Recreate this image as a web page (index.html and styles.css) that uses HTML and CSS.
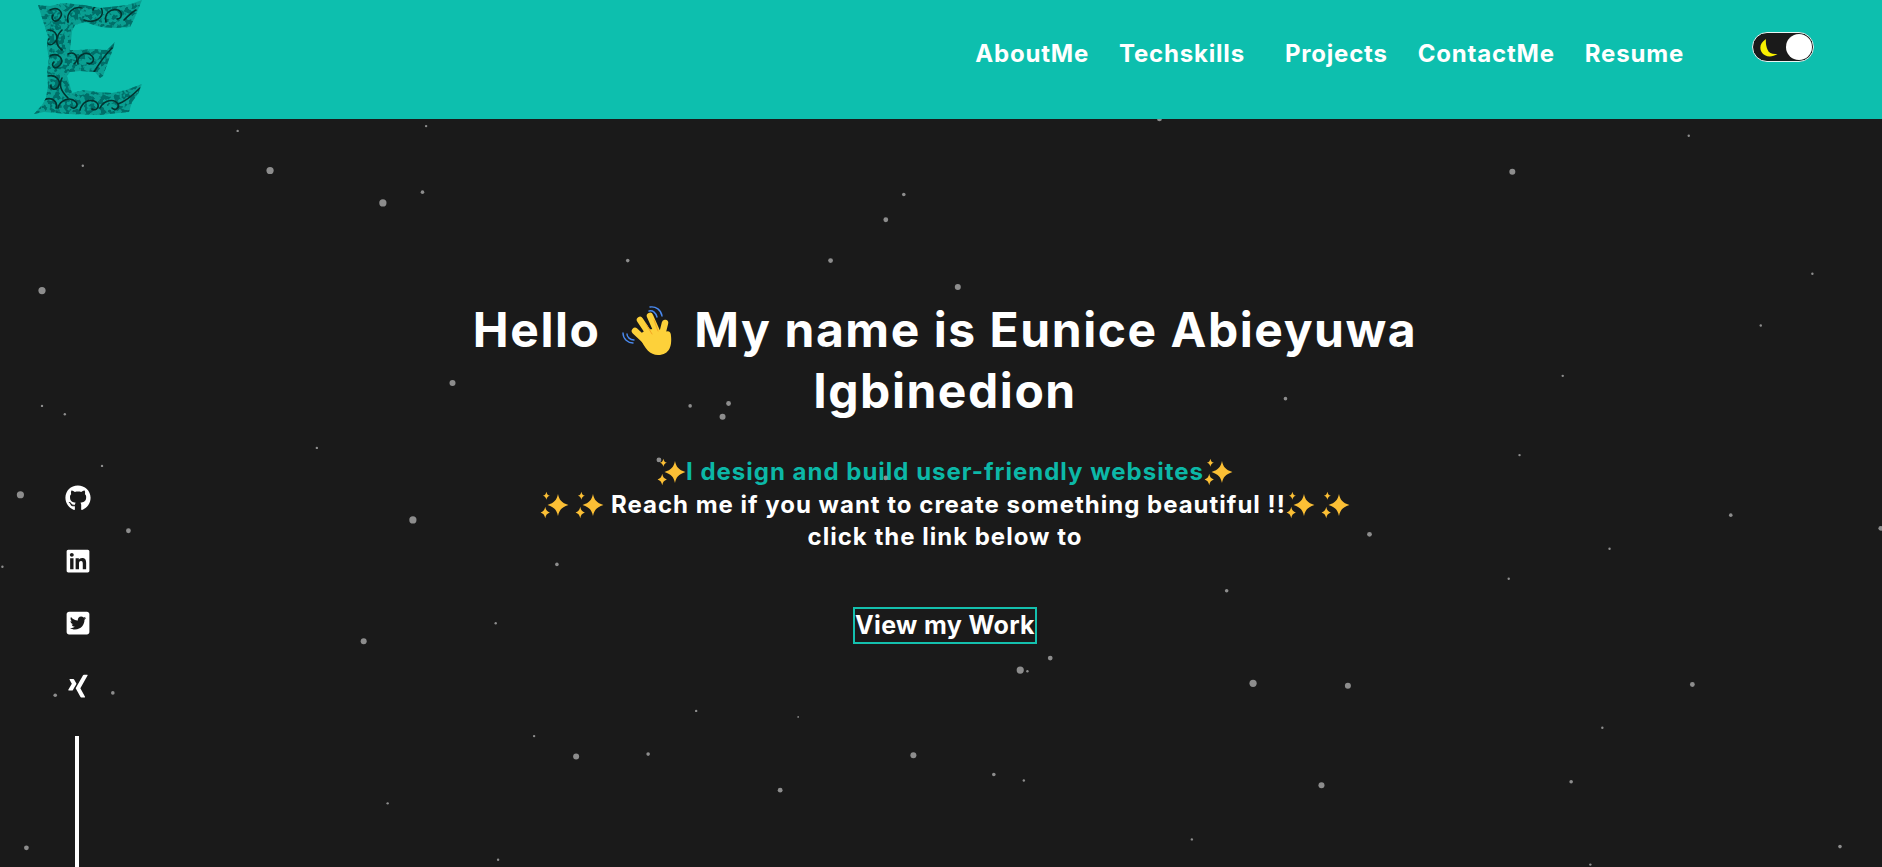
FILE: index.html
```html
<!DOCTYPE html>
<html lang="en">
<head>
<meta charset="utf-8">
<title>Eunice Abieyuwa Igbinedion</title>
<link rel="stylesheet" href="styles.css">
</head>
<body>
<svg class="stars" viewBox="0 0 1568 722" preserveAspectRatio="none" aria-hidden="true">
<g fill="#fff" fill-opacity=".5">
<circle cx="198" cy="109" r="1"/><circle cx="355" cy="105" r="1"/><circle cx="69" cy="138" r="1"/><circle cx="225" cy="142" r="3"/><circle cx="352" cy="160" r="1.5"/><circle cx="319" cy="169" r="3"/><circle cx="753" cy="162" r="1.5"/><circle cx="738" cy="183" r="2"/><circle cx="966" cy="99" r="2"/><circle cx="1407" cy="113" r="1"/><circle cx="1260" cy="143" r="2.5"/><circle cx="523" cy="217" r="1.5"/><circle cx="692" cy="217" r="2"/><circle cx="798" cy="239" r="2.5"/><circle cx="35" cy="242" r="3"/><circle cx="1510" cy="228" r="1"/><circle cx="1467" cy="271" r="1"/><circle cx="1302" cy="313" r="1"/><circle cx="377" cy="319" r="2.5"/><circle cx="35" cy="338" r="1"/><circle cx="54" cy="345" r="1"/><circle cx="575" cy="338" r="1.5"/><circle cx="607" cy="336" r="2"/><circle cx="602" cy="347" r="2.5"/><circle cx="1071" cy="332" r="1.5"/><circle cx="264" cy="373" r="1"/><circle cx="85" cy="388" r="1"/><circle cx="549" cy="383" r="2"/><circle cx="1266" cy="379" r="1"/><circle cx="738" cy="398" r="2"/><circle cx="17" cy="412" r="3"/><circle cx="344" cy="433" r="3"/><circle cx="107" cy="442" r="2"/><circle cx="1442" cy="429" r="1.5"/><circle cx="1141" cy="445" r="2"/><circle cx="2" cy="472" r="1"/><circle cx="464" cy="470" r="1.5"/><circle cx="1341" cy="457" r="1"/><circle cx="1257" cy="482" r="1"/><circle cx="1022" cy="492" r="1.5"/><circle cx="413" cy="519" r="1"/><circle cx="303" cy="534" r="2.5"/><circle cx="875" cy="548" r="2"/><circle cx="850" cy="558" r="3"/><circle cx="856" cy="559" r="1"/><circle cx="1044" cy="569" r="3"/><circle cx="1123" cy="571" r="2.5"/><circle cx="1410" cy="570" r="2"/><circle cx="46" cy="579" r="1.5"/><circle cx="94" cy="577" r="1.5"/><circle cx="580" cy="592" r="1"/><circle cx="665" cy="597" r=".7"/><circle cx="1335" cy="606" r="1"/><circle cx="445" cy="613" r="1"/><circle cx="480" cy="630" r="2.5"/><circle cx="540" cy="628" r="1.5"/><circle cx="761" cy="629" r="2.5"/><circle cx="828" cy="645" r="1.5"/><circle cx="853" cy="650" r="1"/><circle cx="650" cy="658" r="2"/><circle cx="1101" cy="654" r="2.5"/><circle cx="1309" cy="651" r="1.5"/><circle cx="323" cy="669" r="1"/><circle cx="993" cy="699" r="1"/><circle cx="22" cy="706" r="2"/><circle cx="1533" cy="705" r="1.5"/><circle cx="415" cy="716" r="1"/><circle cx="1325" cy="720" r="1"/><circle cx="1567" cy="440" r="2"/>
</g>
</svg>

<svg class="defs" width="0" height="0" aria-hidden="true">
<symbol id="sparkle" viewBox="0.5 0.5 25 24">
<path fill="#fbbf35" d="M16 3c1 5 3 7.500 9 9.500-6 2-8 4.500-9 9.500-1-5-3-7.500-9-9.500 6-2 8-4.500 9-9.500z"/>
<path fill="#fbbf35" d="M6 1c.5 2 1 3 3 3.500-2 .5-2.500 1.500-3 3.500-.5-2-1-3-3-3.500 2-.5 2.500-1.500 3-3.500z"/>
<path fill="#fbbf35" d="M5 14c.5 2.800 1.500 4 4 5-2.500 1-3.500 2.200-4 5-.5-2.800-1.500-4-4-5 2.500-1 3.500-2.200 4-5z"/>
</symbol>
</svg>

<header class="topbar">
<a class="logo" href="#" aria-label="Logo">
<svg class="logo-mark" viewBox="0 0 150 119">
<defs>
<filter id="filigree" x="0" y="0" width="100%" height="100%">
<feTurbulence type="fractalNoise" baseFrequency=".2" numOctaves="2" seed="11"/>
<feColorMatrix values="0 0 0 0 0 0 0 0 0 .16 0 0 0 0 .14 10 0 0 0 -4.800"/>
</filter>
<clipPath id="eshape"><path d="M38 5L50 6 64 3 84 5 100 8 128 5 142 0 138 10 135 17 130 27 115 28 100 27 85 22 75 25 72 31 70 50 78 50 93 49 107 50 115 42 112 52 108 62 103 76 100 78 95 72 80 71 70 72 67 76 70 86 72 93 84 90 98 92 112 93 126 90 142 84 138 94 132 102 129 112 118 113 100 115 68 114 44 112 34 114 42 105 46 98 48 86 47 72 49 58 47 48 48 36 46 30 44 24Z"/></clipPath>
</defs>
<g clip-path="url(#eshape)">
<rect width="150" height="119" fill="#0a9f92"/>
<rect width="150" height="119" filter="url(#filigree)"/>
<g class="logo-swirl">
<path d="M50 10c8-4 14 2 10 8s-10 2-7-3"/><path d="M68 22c-2-10 6-16 14-14"/><path d="M84 20c10 4 20-2 18-10-1-5-8-5-9 0"/><path d="M106 22c-2-8 4-14 12-12 5 2 4 9-1 9"/><path d="M124 20c4-4 8-8 12-10"/>
<path d="M48 30c8 0 12 8 6 13s-9-2-5-4"/><path d="M62 30c-6 6-8 14 0 20"/><path d="M50 56c8-4 15 3 10 9s-10 0-6-3"/><path d="M48 76c8-2 14 5 10 11-3 4-8 2-7-2"/><path d="M62 78c-4 8 0 14 6 20"/>
<path d="M68 54c8-4 12 6 6 10"/><path d="M78 64c-2-8 8-14 14-8 4 5-2 10-5 7"/><path d="M94 72c4-6 8-14 18-24"/>
<path d="M44 100c8-4 14 2 12 8"/><path d="M58 108c2-8 12-12 18-6 3 4-2 8-5 5"/><path d="M80 110c2-8 10-12 16-8 5 4 0 10-4 7"/><path d="M100 108c4-8 14-10 18-4 2 4-3 7-6 4"/><path d="M118 104c6-2 14-8 22-16"/>
</g>
</g>
</svg>
</a>
<nav class="nav">
<a class="nav-link" href="#">AboutMe</a>
<a class="nav-link nav-link-wide" href="#">Techskills</a>
<a class="nav-link" href="#">Projects</a>
<a class="nav-link" href="#">ContactMe</a>
<a class="nav-link" href="#">Resume</a>
</nav>
<button class="toggle" type="button" aria-label="Theme">
<svg class="moon" viewBox="0 0 18 18"><path fill="#f8f000" d="M6 0C.5 3.500-1 8.500 1.500 13c3 5 10 6 16 2-5 .5-8.500-.5-10-4.500C6.300 7.500 5.500 4 6 0z"/></svg>
<span class="knob"></span>
</button>
</header>

<main class="layout">
<aside class="social">
<a class="social-link" href="#" aria-label="GitHub"><svg viewBox="0 0 496 512"><path d="M165.9 397.4c0 2-2.300 3.600-5.200 3.600-3.300 0-5.600-1.600-5.600-3.600 0-2 2.300-3.600 5.200-3.600 3-.3 5.600 1.300 5.600 3.600zm-31.100-4.500c-.7 2 1.300 4.300 4.300 4.900 2.600 1 5.600 0 6.200-2s-1.300-4.300-4.300-5.200c-2.600-.7-5.500.3-6.200 2.300zm44.200-1.700c-2.900.7-4.900 2.600-4.600 4.900.3 2 2.900 3.300 5.900 2.600 2.900-.7 4.900-2.600 4.600-4.600-.3-1.900-3-3.200-5.900-2.900zM244.800 8C106.100 8 0 113.300 0 252c0 110.900 69.800 205.800 169.500 239.200 12.800 2.300 17.300-5.600 17.300-12.100 0-6.200-.3-40.400-.3-61.400 0 0-70 15-84.700-29.800 0 0-11.400-29.100-27.800-36.600 0 0-22.900-15.700 1.600-15.400 0 0 24.900 2 38.600 25.800 21.900 38.600 58.600 27.500 72.900 20.900 2.300-16 8.800-27.100 16-33.700-55.900-6.200-112.300-14.300-112.300-110.500 0-27.500 7.600-41.300 23.600-58.900-2.600-6.500-11.100-33.300 2.600-67.900 20.900-6.500 69 27 69 27 20-5.600 41.500-8.500 62.800-8.500s42.800 2.900 62.800 8.500c0 0 48.100-33.600 69-27 13.700 34.700 5.200 61.400 2.600 67.900 16 17.700 25.800 31.500 25.800 58.900 0 96.500-58.900 104.200-114.800 110.500 9.200 7.900 17 22.900 17 46.400 0 33.700-.3 75.400-.3 83.600 0 6.500 4.600 14.400 17.300 12.100C428.200 457.800 496 362.900 496 252 496 113.300 383.500 8 244.800 8z"/></svg></a>
<a class="social-link" href="#" aria-label="LinkedIn"><svg viewBox="0 0 448 512"><path d="M416 32H31.900C14.300 32 0 46.500 0 64.300v383.400C0 465.500 14.300 480 31.900 480H416c17.600 0 32-14.500 32-32.300V64.300c0-17.800-14.400-32.300-32-32.300zM135.400 416H69V202.200h66.500V416zm-33.200-243c-21.300 0-38.500-17.300-38.500-38.500S80.900 96 102.200 96c21.200 0 38.500 17.300 38.500 38.500 0 21.300-17.200 38.500-38.500 38.500zm282.100 243h-66.400V312c0-24.800-.5-56.700-34.500-56.700-34.600 0-39.900 27-39.900 54.900V416h-66.400V202.200h63.700v29.200h.9c8.900-16.800 30.600-34.500 62.900-34.500 67.200 0 79.700 44.300 79.700 101.900V416z"/></svg></a>
<a class="social-link" href="#" aria-label="Twitter"><svg viewBox="0 0 448 512"><path d="M400 32H48C21.500 32 0 53.500 0 80v352c0 26.500 21.500 48 48 48h352c26.500 0 48-21.500 48-48V80c0-26.500-21.500-48-48-48zm-48.900 158.800c.2 2.800.2 5.700.2 8.500 0 86.700-66 186.600-186.600 186.600-37.200 0-71.700-10.800-100.700-29.400 5.300.6 10.400.8 15.800.8 30.700 0 58.900-10.400 81.400-28-28.800-.6-53-19.500-61.300-45.500 10.100 1.500 19.200 1.500 29.600-1.200-30-6.100-52.500-32.500-52.500-64.400v-.8c8.700 4.900 18.900 7.900 29.600 8.300a65.447 65.447 0 0 1-29.200-54.600c0-12.200 3.200-23.400 8.900-33.100 32.300 39.800 80.800 65.800 135.200 68.600-9.300-44.500 24-80.600 64-80.600 18.900 0 35.900 7.900 47.900 20.700 14.800-2.800 29-8.300 41.600-15.800-4.900 15.200-15.200 28-28.800 36.100 13.200-1.400 26-5.100 37.800-10.200-8.900 13.100-20.100 24.700-32.900 34z"/></svg></a>
<a class="social-link" href="#" aria-label="Xing"><svg viewBox="0 0 384 512"><path d="M162.700 210c-1.800 3.300-25.200 44.400-70.100 123.500-4.900 8.300-10.800 12.500-17.700 12.500H9.800c-7.700 0-12.100-7.500-8.500-14.400l69-121.300c.2 0 .2-.1 0-.3l-43.900-75.600c-4.300-7.800.3-14.100 8.500-14.100H100c7.300 0 13.300 4.100 18 12.200l44.700 77.500zM382.600 46.100l-144 253v.3L330.200 466c3.900 7.100.2 14.100-8.500 14.100h-65.200c-7.600 0-13.600-4-18-12.200l-92.400-168.500c3.300-5.800 51.500-90.800 144.800-255.200 4.600-8.100 10.400-12.200 17.500-12.200h65.700c8 0 12.300 6.700 8.500 14.100z"/></svg></a>
<span class="social-line"></span>
</aside>

<section class="hero">
<h1 class="hero-title">Hello <svg class="wave" viewBox="0 0 50 50" aria-label="waving hand">
<g fill="none" stroke="#fdd13a" stroke-width="6.500" stroke-linecap="round"><path d="M13 25l14 13"/><path d="M18 14l12 18"/><path d="M28 10l8 18"/><path d="M43 17l-3 12"/></g>
<path fill="#fdd13a" d="M17 30c4-6 14-10 25-4 5-2 7 0 7 4 1 9-1 19-13 19-8 0-13-6-19-19z"/>
<g fill="none" stroke="#f5a623" stroke-width="1" stroke-linecap="round"><path d="M24 18l6 10"/><path d="M32 14l4 11"/></g>
<g fill="none" stroke="#4a8af0" stroke-width="1.400" stroke-linecap="round"><path d="M28 1c6-1 11 3 12 9"/><path d="M27 5c4-1 7 2 8 6"/><path d="M1 27c0 6 5 10 10 10"/><path d="M5 28c0 3 3 6 7 6"/></g>
</svg> My name is Eunice Abieyuwa Igbinedion</h1>
<p class="hero-text">
<svg class="spark"><use href="#sparkle"/></svg><span class="accent">I design and build user-friendly websites</span><svg class="spark"><use href="#sparkle"/></svg><br>
<svg class="spark"><use href="#sparkle"/></svg> <svg class="spark"><use href="#sparkle"/></svg> Reach me if you want to create something beautiful !!<svg class="spark"><use href="#sparkle"/></svg> <svg class="spark"><use href="#sparkle"/></svg><br>
click the link below to
</p>
<a class="cta" href="#">View my Work</a>
</section>
</main>
</body>
</html>
```
FILE: styles.css
```css
* { box-sizing: border-box; }
html, body { height: 100%; margin: 0; }
body {
  display: flex;
  flex-direction: column;
  position: relative;
  overflow: hidden;
  background: #1a1a1a;
  color: #fff;
  font-family: Inter, "Liberation Sans", sans-serif;
}
a { color: inherit; text-decoration: none; }
.defs { position: absolute; }
.stars { position: absolute; inset: 0; width: 100%; height: 100%; }

.topbar {
  position: relative;
  flex: none;
  height: 119px;
  display: flex;
  align-items: center;
  padding-right: 68px;
  background: #0dbfae;
}
.logo { display: block; width: 150px; height: 119px; }
.logo-mark { display: block; width: 100%; height: 100%; }
.logo-swirl { fill: none; stroke: #03332f; stroke-width: 1.6; stroke-linecap: round; }
.nav { display: flex; gap: 30px; margin-left: auto; margin-right: 68px; margin-bottom: 11px; }
.nav-link { font-size: 24px; font-weight: 700; line-height: 36px; letter-spacing: .8px; }
.nav-link-wide { margin-right: 10px; }
.toggle {
  display: flex;
  align-items: center;
  justify-content: space-between;
  width: 62px;
  height: 30px;
  margin-bottom: 25px;
  padding: 0 1px 0 7px;
  border: 1px solid #e8f6f4;
  border-radius: 15px;
  background: #1a1a1a;
}
.moon { width: 18px; height: 18px; margin-top: 1px; }
.knob { width: 26px; height: 26px; border-radius: 50%; background: #fff; }

.layout { position: relative; flex: 1; min-height: 0; display: flex; }
.social {
  flex: none;
  width: 155px;
  display: flex;
  flex-direction: column;
  align-items: center;
  gap: 36.500px;
  padding-top: 366px;
}
.social-link { display: block; width: 26px; height: 26px; }
.social-link svg { display: block; width: 100%; height: 100%; fill: #fff; }
.social-line { flex: 1; width: 4px; margin-left: -1px; margin-top: 1px; background: #fff; }

.hero {
  flex: 1;
  display: flex;
  flex-direction: column;
  align-items: center;
  padding: 180px 147px 0 0;
  text-align: center;
}
.hero-title {
  width: 1020px;
  margin: 0;
  font-size: 48px;
  font-weight: 700;
  line-height: 61px;
  letter-spacing: 1.55px;
}
.wave { width: 50px; height: 50px; vertical-align: -9px; margin: 0 9px; }
.hero-text {
  margin: 35px 0 0;
  font-size: 24px;
  font-weight: 700;
  line-height: 32.500px;
  letter-spacing: 1px;
}
.accent { color: #0cb8a7; }
.spark { width: 29px; height: 28px; vertical-align: -6px; }
.cta {
  display: block;
  margin-top: 53px;
  padding: 0;
  border: 2px solid #14c0ae;
  font-size: 25px;
  font-weight: 700;
  line-height: 33px;
  letter-spacing: .35px;
}
```
